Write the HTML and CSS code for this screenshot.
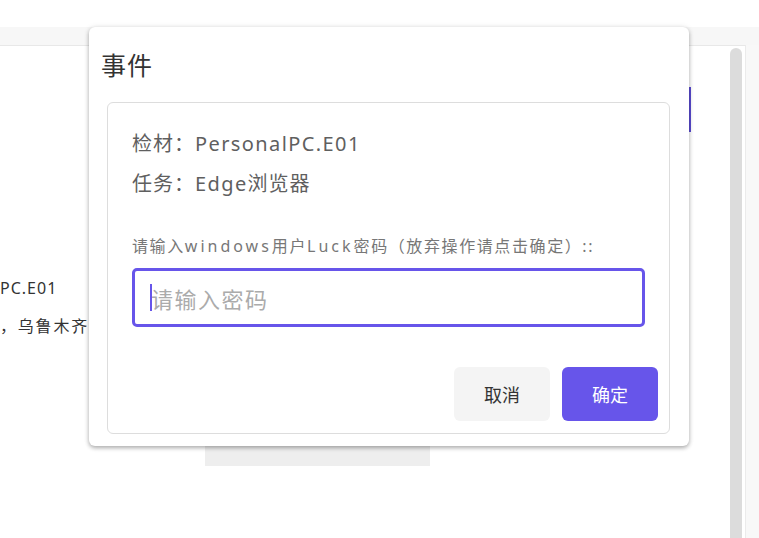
FILE: index.html
```html
<!DOCTYPE html>
<html lang="zh">
<head>
<meta charset="utf-8">
<title>事件</title>
<link rel="stylesheet" href="styles.css">
</head>
<body>
<div class="page">
  <div class="top"></div>
  <div class="bar"></div>
  <div class="main">
    <div class="content">
      <div class="doc">
        <div class="toolbar"><span class="tool-btn"></span></div>
        <p class="line first">PC.E01</p>
        <p class="line cjk">，乌鲁木齐</p>
        <div class="gray-block"></div>
      </div>
      <div class="scroll"></div>
    </div>
    <div class="side"></div>
  </div>

  <div class="modal">
    <h2 class="modal-title">事件</h2>
    <div class="card">
      <div class="card-body">
        <p class="info">检材：<span class="latin">PersonalPC.E01</span></p>
        <p class="info">任务：<span class="latin">Edge</span>浏览器</p>
        <label class="label" for="pwd">请输入<span class="latin">windows</span>用户<span class="latin">Luck</span>密码（放弃操作请点击确定）::</label>
        <div class="input-wrap">
          <input id="pwd" class="input" type="password" placeholder="请输入密码">
          <span class="caret"></span>
        </div>
      </div>
      <div class="card-footer">
        <button class="btn btn-cancel">取消</button>
        <button class="btn btn-ok">确定</button>
      </div>
    </div>
  </div>
</div>
</body>
</html>
```
FILE: styles.css
```css
* { box-sizing: border-box; }
html, body { margin: 0; padding: 0; background: #fff; }
body { font-family: "Noto Sans", "Noto Sans CJK SC", sans-serif; color: #333; }

.page { position: relative; width: 759px; height: 538px; overflow: hidden; display: flex; flex-direction: column; }
.top { height: 27px; background: #fff; flex: none; }
.bar { height: 18px; background: #f7f7f7; flex: none; }
.main { flex: 1; display: flex; background: #f8f8f8; }
.content { width: 746px; flex: none; background: #fff; border-top: 1px solid #e8e8e8; border-right: 1px solid #ebebeb; display: flex; }
.doc { flex: 1; padding-top: 41px; }
.toolbar { display: flex; justify-content: flex-end; padding-right: 39px; }
.tool-btn { width: 90px; height: 45px; background: #5a4bd2; }
.line { margin: 0; font-size: 16px; line-height: 24px; letter-spacing: 1px; color: #333; white-space: nowrap; }
.line.cjk { letter-spacing: 1.8px; }
.line.first { margin-top: 144px; margin-bottom: 14px; }
.gray-block { margin: 60px 0 0 205px; width: 225px; height: 68px; background: #eeeeee; }
.scroll { width: 12px; flex: none; margin: 2px 3px 0 0; background: #dcdcdc; border-radius: 6px 6px 0 0; }
.side { flex: 1; }

.modal { position: absolute; left: 89px; top: 27px; width: 600px; height: 419px; background: #fff; border-radius: 6px; box-shadow: 0 2px 4px rgba(0,0,0,0.3), 0 0 6px rgba(0,0,0,0.08); padding: 18px 19px 12px 18px; display: flex; flex-direction: column; }
.modal-title { margin: 0 0 18px -6px; font-size: 25px; font-weight: 400; line-height: 39px; letter-spacing: 1px; color: #333; font-family: "Noto Sans CJK SC", sans-serif; }
.card { flex: 1; border: 1px solid #dddddd; border-radius: 6px; background: #fff; display: flex; flex-direction: column; }
.card-body { padding: 21px 24px 0 24px; }
.info { margin: 0; font-size: 20px; line-height: 40px; letter-spacing: 1px; color: #5f5f5f; }
.info .latin { letter-spacing: 1.4px; }
.label { display: block; margin-top: 30px; font-size: 16px; line-height: 24px; letter-spacing: 1.6px; color: #777; white-space: nowrap; }
.label .latin { letter-spacing: 3px; }
.input-wrap { position: relative; margin-top: 10px; }
.input { display: block; width: 100%; height: 59px; border: 3px solid #6755ea; border-radius: 5px; padding: 0 0 0 16px; font-family: "Noto Sans CJK SC", sans-serif; font-size: 22px; letter-spacing: 1.5px; outline: none; background: #fff; }
.input::placeholder { color: #ababab; }
.caret { position: absolute; left: 18px; top: 16px; width: 2px; height: 27px; background: #6755ea; }
.card-footer { margin-top: 40px; display: flex; justify-content: flex-end; gap: 12px; padding-right: 11px; }
.btn { width: 96px; height: 54px; border: none; border-radius: 6px; font-family: "Noto Sans CJK SC", sans-serif; font-size: 18px; cursor: pointer; }
.btn-cancel { background: #f4f4f4; color: #333; }
.btn-ok { background: #6755ea; color: #fff; }
```
